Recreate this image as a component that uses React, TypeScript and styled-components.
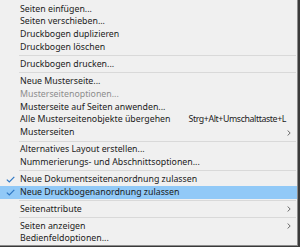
import {FC} from "react";
import styled, {createGlobalStyle} from "styled-components";

const GlobalStyle = createGlobalStyle`
  html, body {
    margin: 0;
    padding: 0;
    background: #3a3a3a;
  }
  body {
    width: 300px;
    height: 247px;
    overflow: hidden;
  }
`

const MenuWrap = styled.div`
  width: 297px;
  padding-top: 2.6px;
  background: #f0f0f0;
  border-right: 1px solid #8c8c8c;
  border-bottom: 1px solid #8c8c8c;
  font-family: "Noto Sans", "Open Sans", sans-serif;
  font-size: 8.8px;
  color: #1b1b1b;
`

const Row = styled.div<{ $active?: boolean; $disabled?: boolean }>`
  display: grid;
  grid-template-columns: 20px 1fr auto 11px;
  align-items: center;
  height: 12.8px;
  white-space: nowrap;
  background: ${p => p.$active ? "#91c9f7" : "transparent"};
  color: ${p => p.$disabled ? "#8d8d8d" : "#1b1b1b"};
`

const CheckCell = styled.span`
  display: flex;
  justify-content: center;
  align-items: center;
  height: 100%;
`

const Label = styled.span`
  line-height: 12.8px;
`

const Shortcut = styled.span`
  line-height: 12.8px;
  letter-spacing: -0.4px;
`

const ArrowCell = styled.span`
  display: flex;
  align-items: center;
  height: 100%;
  padding-left: 1px;
`

const Separator = styled.div`
  height: 4.2px;
  display: flex;
  align-items: center;
  padding-left: 19px;
  padding-right: 1px;

  &::after {
    content: "";
    flex: 1;
    height: 1px;
    background: #d9d9d9;
  }
`

type MenuItemProps = {
    label: string;
    shortcut?: string;
    checked?: boolean;
    disabled?: boolean;
    active?: boolean;
    submenu?: boolean;
}

const CheckIcon = () => (
    <svg width="9" height="7" viewBox="0 0 9 7">
        <path d="M0.8 3.6 L3.3 6 L8.3 0.8" fill="none" stroke="#2f78c4" strokeWidth="1.2"/>
    </svg>
)

const Chevron = () => (
    <svg width="4" height="6" viewBox="0 0 4 6">
        <path d="M0.6 0.5 L3.2 3 L0.6 5.5" fill="none" stroke="#6b6b6b" strokeWidth="1"/>
    </svg>
)

const MenuItem: FC<MenuItemProps> = ({label, shortcut, checked, disabled, active, submenu}) => (
    <Row $active={active} $disabled={disabled}>
        <CheckCell>{checked && <CheckIcon/>}</CheckCell>
        <Label>{label}</Label>
        <Shortcut>{shortcut}</Shortcut>
        <ArrowCell>{submenu && <Chevron/>}</ArrowCell>
    </Row>
)

export default function App() {
    return (
        <>
            <GlobalStyle/>
            <MenuWrap>
                <MenuItem label="Seiten einfügen..."/>
                <MenuItem label="Seiten verschieben..."/>
                <MenuItem label="Druckbogen duplizieren"/>
                <MenuItem label="Druckbogen löschen"/>
                <Separator/>
                <MenuItem label="Druckbogen drucken..."/>
                <Separator/>
                <MenuItem label="Neue Musterseite..."/>
                <MenuItem label="Musterseitenoptionen..." disabled/>
                <MenuItem label="Musterseite auf Seiten anwenden..."/>
                <MenuItem label="Alle Musterseitenobjekte übergehen" shortcut="Strg+Alt+Umschalttaste+L"/>
                <MenuItem label="Musterseiten" submenu/>
                <Separator/>
                <MenuItem label="Alternatives Layout erstellen..."/>
                <MenuItem label="Nummerierungs- und Abschnittsoptionen..."/>
                <Separator/>
                <MenuItem label="Neue Dokumentseitenanordnung zulassen" checked/>
                <MenuItem label="Neue Druckbogenanordnung zulassen" checked active/>
                <Separator/>
                <MenuItem label="Seitenattribute" submenu/>
                <Separator/>
                <MenuItem label="Seiten anzeigen" submenu/>
                <MenuItem label="Bedienfeldoptionen..."/>
            </MenuWrap>
        </>
    );
}
